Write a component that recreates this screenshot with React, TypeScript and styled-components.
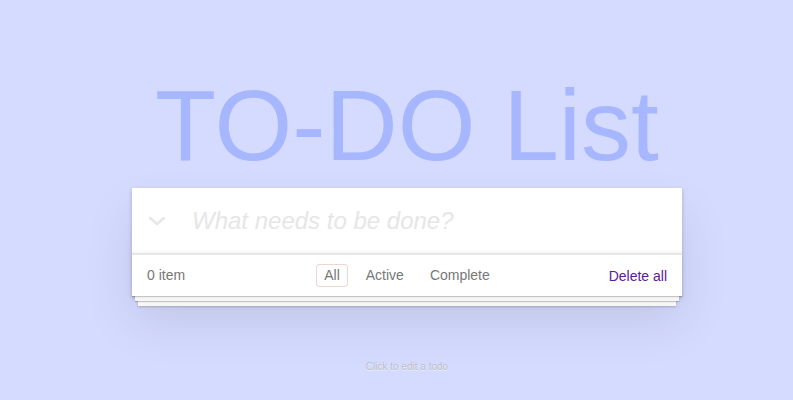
import * as React from 'react';
import styled, { createGlobalStyle } from 'styled-components';

const GlobalStyle = createGlobalStyle`
  html, body {
    margin: 0;
    padding: 0;
    background: #d5dbff;
    font-family: "Liberation Sans", Arial, Helvetica, sans-serif;
    font-size: 14px;
    line-height: 1.4em;
    color: #4d4d4d;
  }
`;

const Page = styled.div`
  width: 571px;
  margin: 0 auto;
  padding: 75px 0 0 21px;
  box-sizing: border-box;
`;

const Title = styled.h1`
  margin: 0 0 13px;
  font-size: 100px;
  line-height: 100px;
  font-weight: 400;
  text-align: center;
  color: #a7b7ff;
`;

const Card = styled.section`
  position: relative;
  width: 550px;
  background: #fff;
  box-shadow: 0 2px 4px 0 rgba(0, 0, 0, 0.2), 0 25px 50px 0 rgba(0, 0, 0, 0.1);
`;

const Header = styled.header`
  position: relative;
  display: flex;
  align-items: center;
  height: 65px;
  box-shadow: inset 0 -2px 1px rgba(0, 0, 0, 0.03);
`;

const ToggleAll = styled.span`
  display: flex;
  align-items: center;
  justify-content: center;
  width: 60px;
  height: 65px;
  flex-shrink: 0;
  padding-right: 11px;
  box-sizing: border-box;
`;

const NewTodo = styled.input`
  flex: 1;
  border: none;
  outline: none;
  padding: 16px 16px 16px 0;
  font-family: inherit;
  font-size: 24px;
  font-style: italic;
  color: #4d4d4d;
  background: transparent;
  &::placeholder {
    color: #e6e6e6;
    font-style: italic;
  }
`;

const Main = styled.div`
  border-top: 2px solid #e6e6e6;
`;

const Footer = styled.footer`
  position: relative;
  display: flex;
  align-items: center;
  justify-content: space-between;
  height: 41px;
  padding: 0 15px;
  box-sizing: border-box;
  color: #777;
  &::before {
    content: '';
    position: absolute;
    right: 0;
    bottom: 0;
    left: 0;
    height: 41px;
    overflow: hidden;
    box-shadow: 0 1px 1px rgba(0, 0, 0, 0.2), 0 8px 0 -3px #f6f6f6,
      0 9px 1px -3px rgba(0, 0, 0, 0.2), 0 16px 0 -6px #f6f6f6,
      0 17px 2px -6px rgba(0, 0, 0, 0.2);
    z-index: 0;
  }
`;

const Count = styled.span`
  position: relative;
  z-index: 1;
  padding-top: 1px;
`;

const Filters = styled.ul`
  position: absolute;
  left: 0;
  right: 0;
  margin: 0;
  padding: 0;
  list-style: none;
  display: flex;
  justify-content: center;
  z-index: 1;
`;

const FilterLink = styled.a<{ selected?: boolean }>`
  display: block;
  margin: 0 5px;
  padding: 2px 7px;
  line-height: 17px;
  border: 1px solid ${p => (p.selected ? 'rgba(175, 47, 47, 0.2)' : 'transparent')};
  border-radius: 3px;
  color: #777;
  text-decoration: none;
  cursor: pointer;
`;

const DeleteAll = styled.button`
  position: relative;
  z-index: 1;
  border: none;
  background: none;
  padding: 0;
  margin-top: 1px;
  font-family: inherit;
  font-size: 14px;
  color: #5b1a98;
  cursor: pointer;
`;

const Info = styled.footer`
  margin: 61px 0 0;
  width: 550px;
  text-align: center;
  font-size: 10px;
  color: #bfbfbf;
  text-shadow: 0 1px 0 rgba(255, 255, 255, 0.5);
`;

const Chevron = () => (
  <svg width="18" height="10" viewBox="0 0 18 10">
    <polyline points="1.5,1.5 9,8 16.5,1.5" fill="none" stroke="#e6e6e6" strokeWidth="2.6" />
  </svg>
);

export default function App() {
  const [filter, setFilter] = React.useState('All');
  const [text, setText] = React.useState('');
  const todos: string[] = [];

  return (
    <>
      <GlobalStyle />
      <Page>
        <Title>TO-DO List</Title>
        <Card>
          <Header>
            <ToggleAll>
              <Chevron />
            </ToggleAll>
            <NewTodo
              placeholder="What needs to be done?"
              value={text}
              onChange={ev => setText(ev.target.value)}
            />
          </Header>
          <Main />
          <Footer>
            <Count>{todos.length} item</Count>
            <Filters>
              {['All', 'Active', 'Complete'].map(f => (
                <li key={f}>
                  <FilterLink selected={filter === f} onClick={() => setFilter(f)}>
                    {f}
                  </FilterLink>
                </li>
              ))}
            </Filters>
            <DeleteAll>Delete all</DeleteAll>
          </Footer>
        </Card>
        <Info>Click to edit a todo</Info>
      </Page>
    </>
  );
}
